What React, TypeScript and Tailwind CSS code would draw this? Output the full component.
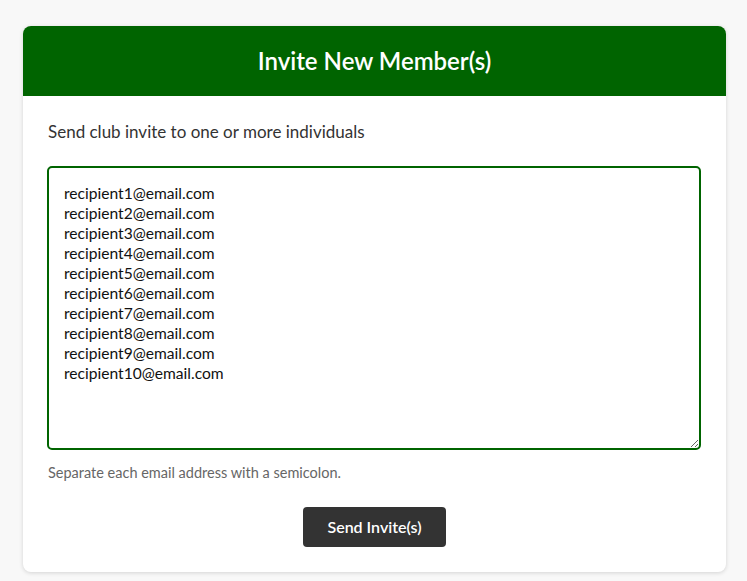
import React, { useEffect, useRef } from "react";

const emails = Array.from({ length: 10 }, (_, i) => `recipient${i + 1}@email.com`).join("\n");

export default function App() {
  const ref = useRef<HTMLTextAreaElement>(null);
  useEffect(() => {
    const el = ref.current;
    if (el) {
      el.focus();
      el.setSelectionRange(emails.length, emails.length);
    }
  }, []);
  return (
    <div className="min-h-[581px] bg-[#f8f8f8] px-[23px] pt-[26px] pb-[9px]" style={{ fontFamily: "Lato, 'Open Sans', sans-serif" }}>
      <div className="w-[703px] rounded-[8px] bg-white shadow-[0_1px_4px_rgba(0,0,0,0.15)]">
        <div className="flex h-[70px] items-center justify-center rounded-t-[8px] bg-[#006400]">
          <h1 className="text-[24px] font-semibold text-white">Invite New Member(s)</h1>
        </div>
        <div className="px-[24px] pt-[25px] pb-[25px]">
          <p className="pl-[1px] text-[17px] leading-[22px] text-[#333]">Send club invite to one or more individuals</p>
          <textarea
            ref={ref}
            className="mt-[23px] block h-[284px] w-[654px] resize-y rounded-[5px] border-2 border-[#006400] px-[15px] pt-[15px] text-[15.6px] leading-[20px] text-[#111] caret-black outline-none"
            style={{ fontFamily: "Lato, 'Open Sans', sans-serif" }}
            defaultValue={emails}
          />
          <p className="mt-[14px] pl-[1px] text-[14.5px] leading-[18px] text-[#666]">Separate each email address with a semicolon.</p>
          <div className="mt-[25px] flex justify-center">
            <button className="h-[40px] w-[143px] rounded-[4px] bg-[#333] text-[16px] font-semibold text-white">Send Invite(s)</button>
          </div>
        </div>
      </div>
    </div>
  );
}
